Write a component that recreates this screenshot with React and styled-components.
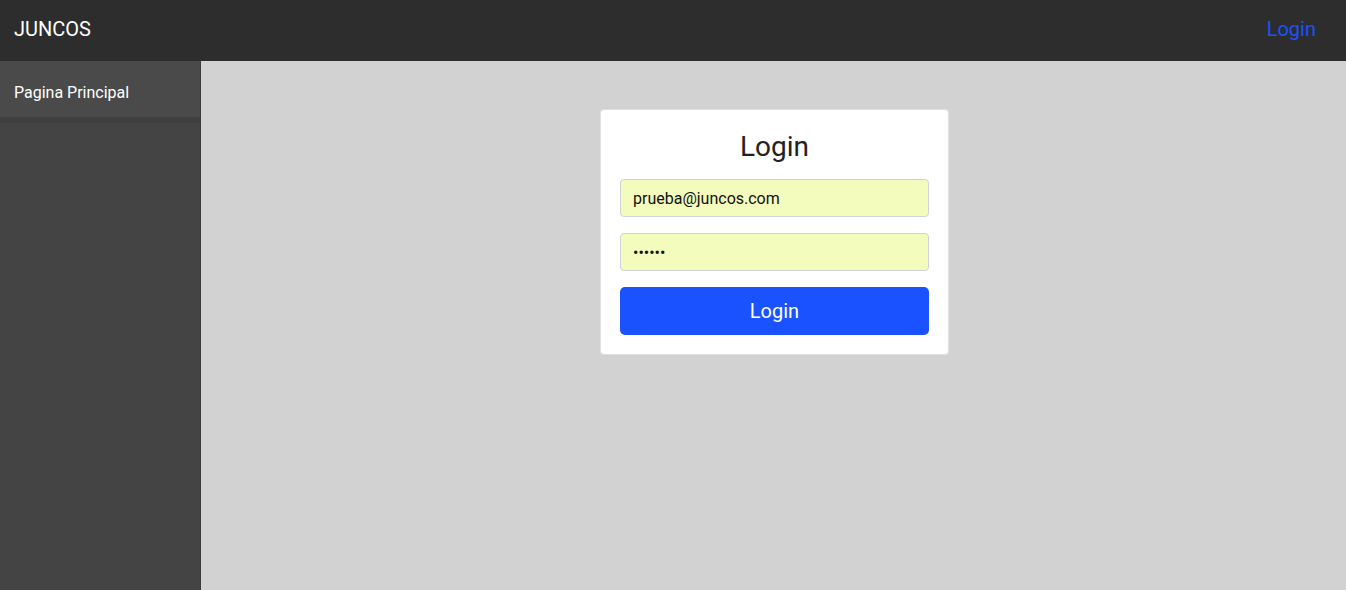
import styled, { createGlobalStyle } from "styled-components";
import { useState } from "react";

function App() {
  const [email, setEmail] = useState("prueba@juncos.com");
  const [password, setPassword] = useState("123456");

  return (
    <>
      <GlobalStyle />
      <Header>
        <Brand>JUNCOS</Brand>
        <NavLink href="#">Login</NavLink>
      </Header>
      <Body>
        <Sidebar>
          <SideItem>Pagina Principal</SideItem>
          <SideDivider />
        </Sidebar>
        <Main>
          <Card>
            <Title>Login</Title>
            <Input
              type="text"
              value={email}
              onChange={({ target: { value } }) => setEmail(value)}
            />
            <Input
              type="password"
              value={password}
              onChange={({ target: { value } }) => setPassword(value)}
            />
            <SubmitBtn>Login</SubmitBtn>
          </Card>
        </Main>
      </Body>
    </>
  );
}

export default App;

const GlobalStyle = createGlobalStyle`
  html, body {
    margin: 0;
    padding: 0;
    height: 100%;
    font-family: Roboto, "Liberation Sans", sans-serif;
  }
  #root {
    height: 100%;
    display: flex;
    flex-direction: column;
  }
  * { box-sizing: border-box; }
`;

const Header = styled.header`
  height: 61px;
  background: #2d2d2d;
  display: flex;
  align-items: center;
  justify-content: space-between;
  padding: 0 30px 4px 14px;
`;

const Brand = styled.div`
  color: #fff;
  font-size: 20px;
`;

const NavLink = styled.a`
  color: #1a52ff;
  font-size: 20px;
  text-decoration: none;
`;

const Body = styled.div`
  flex: 1;
  display: flex;
`;

const Sidebar = styled.aside`
  width: 201px;
  background: #444;
  border-right: 1px solid #3c3c3c;
`;

const SideItem = styled.div`
  height: 56px;
  background: #4a4a4a;
  color: #fff;
  font-size: 16px;
  display: flex;
  align-items: center;
  padding: 6px 0 0 14px;
`;

const SideDivider = styled.div`
  height: 6px;
  background: #3f3f3f;
`;

const Main = styled.main`
  flex: 1;
  background: #d2d2d2;
  display: flex;
  justify-content: center;
  align-items: flex-start;
  padding: 48px 0 0 2px;
`;

const Card = styled.div`
  width: 349px;
  background: #fff;
  border: 1px solid #e0e0e0;
  border-radius: 4px;
  padding: 19px 19px 19px;
  display: flex;
  flex-direction: column;
  gap: 17px;
`;

const Title = styled.h2`
  margin: 0 0 -3px;
  font-weight: 400;
  font-size: 28px;
  line-height: 36px;
  text-align: center;
  color: #222;
`;

const Input = styled.input`
  height: 38px;
  background: #f3fcbc;
  border: 1px solid #cfd2d6;
  border-radius: 4px;
  padding: 0 12px;
  font-size: 16px;
  font-family: Roboto, "Liberation Sans", sans-serif;
  color: #111;
  outline: none;

  & + & {
    margin-top: -1px;
  }
`;

const SubmitBtn = styled.button`
  height: 48px;
  margin-top: -1px;
  border: none;
  border-radius: 5px;
  background: #1a52ff;
  color: #fff;
  font-size: 20px;
  font-family: Roboto, "Liberation Sans", sans-serif;
  cursor: pointer;
`;
